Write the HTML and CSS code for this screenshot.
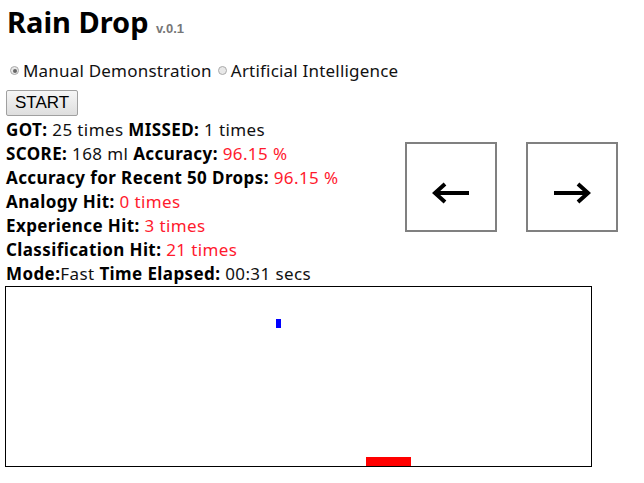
FILE: index.html
```html
<!DOCTYPE html>
<html>
<head>
<meta charset="utf-8">
<link rel="stylesheet" href="styles.css">
</head>
<body>
<h1 class="title">Rain Drop <small class="version">v.0.1</small></h1>
<div class="modes">
  <label class="mode"><input type="radio" name="mode" checked>Manual Demonstration</label>
  <label class="mode"><input type="radio" name="mode">Artificial Intelligence</label>
</div>
<button class="start">START</button>
<div class="panel">
  <div class="stats">
    <div class="line"><b>GOT:</b> 25 times <b>MISSED:</b> 1 times</div>
    <div class="line"><b>SCORE:</b> 168 ml <b>Accuracy:</b> <span class="red">96.15 %</span></div>
    <div class="line"><b>Accuracy for Recent 50 Drops:</b> <span class="red">96.15 %</span></div>
    <div class="line"><b>Analogy Hit:</b> <span class="red">0 times</span></div>
    <div class="line"><b>Experience Hit:</b> <span class="red">3 times</span></div>
    <div class="line"><b>Classification Hit:</b> <span class="red">21 times</span></div>
    <div class="line"><b>Mode:</b>Fast <b>Time Elapsed:</b> 00:31 secs</div>
  </div>
  <div class="arrows">
    <div class="arrow-box">
      <svg width="38" height="22" viewBox="0 0 38 22"><path d="M2 11H37M13 2L3 11L13 20" fill="none" stroke="#000" stroke-width="4" stroke-linejoin="miter"/></svg>
    </div>
    <div class="arrow-box">
      <svg width="38" height="22" viewBox="0 0 38 22"><path d="M1 11H36M25 2L35 11L25 20" fill="none" stroke="#000" stroke-width="4" stroke-linejoin="miter"/></svg>
    </div>
  </div>
</div>
<div class="field">
  <div class="drop" style="left:270px;top:32px"></div>
  <div class="paddle" style="left:360px;top:170px"></div>
</div>
</body>
</html>
```
FILE: styles.css
```css
* { box-sizing: border-box; }
body {
  margin: 0;
  padding: 0 0 0 6px;
  font-family: "Noto Sans", "Noto Sans CJK KR", sans-serif;
  font-size: 17px;
  letter-spacing: 0.4px;
  color: #111;
  background: #fff;
}
.title {
  margin: 0;
  padding: 2px 0 0 1px;
  height: 50px;
  font-size: 29px;
  font-weight: bold;
  line-height: 40px;
  letter-spacing: 0;
  color: #000;
}
.version {
  font-family: "Liberation Sans", sans-serif;
  font-size: 13px;
  color: #777;
  font-weight: bold;
}
.modes {
  display: flex;
  gap: 6px;
  height: 40px;
  align-items: center;
  padding-left: 4px;
  letter-spacing: 0.2px;
}
.mode {
  display: flex;
  align-items: center;
  gap: 4px;
}
.mode input {
  appearance: none;
  -webkit-appearance: none;
  margin: 1px 0 0 0;
  width: 9px;
  height: 9px;
  border-radius: 50%;
  border: 1px solid #aaa;
  background: #e8e8e8;
  position: relative;
}
.mode input:checked::after {
  content: "";
  position: absolute;
  left: 1.5px;
  top: 1.5px;
  width: 4px;
  height: 4px;
  border-radius: 50%;
  background: #666;
}
.start {
  display: block;
  margin: 0;
  width: 72px;
  height: 26px;
  padding: 0;
  font-family: "Liberation Sans", Arial, sans-serif;
  font-size: 17px;
  letter-spacing: 0;
  color: #000;
  background: linear-gradient(#f6f6f6, #dedede);
  border: 1px solid #a0a0a0;
  border-radius: 2px;
}
.panel {
  display: flex;
  margin-top: 2px;
}
.stats {
  width: 399px;
}
.line {
  height: 24px;
  line-height: 24px;
  white-space: nowrap;
}
.line b { color: #000; }
.red { color: #ff1a2e; }
.arrows {
  display: flex;
  gap: 29px;
  padding-top: 24px;
}
.arrow-box {
  width: 92px;
  height: 90px;
  border: 2px solid #808080;
  display: flex;
  align-items: center;
  justify-content: center;
}
.arrow-box svg {
  margin-top: 12px;
}
.field {
  position: relative;
  margin-left: -1px;
  width: 587px;
  height: 181px;
  border: 1px solid #000;
}
.drop {
  position: absolute;
  width: 5px;
  height: 9px;
  background: #0000ff;
}
.paddle {
  position: absolute;
  width: 45px;
  height: 9px;
  background: #ff0000;
}
```
